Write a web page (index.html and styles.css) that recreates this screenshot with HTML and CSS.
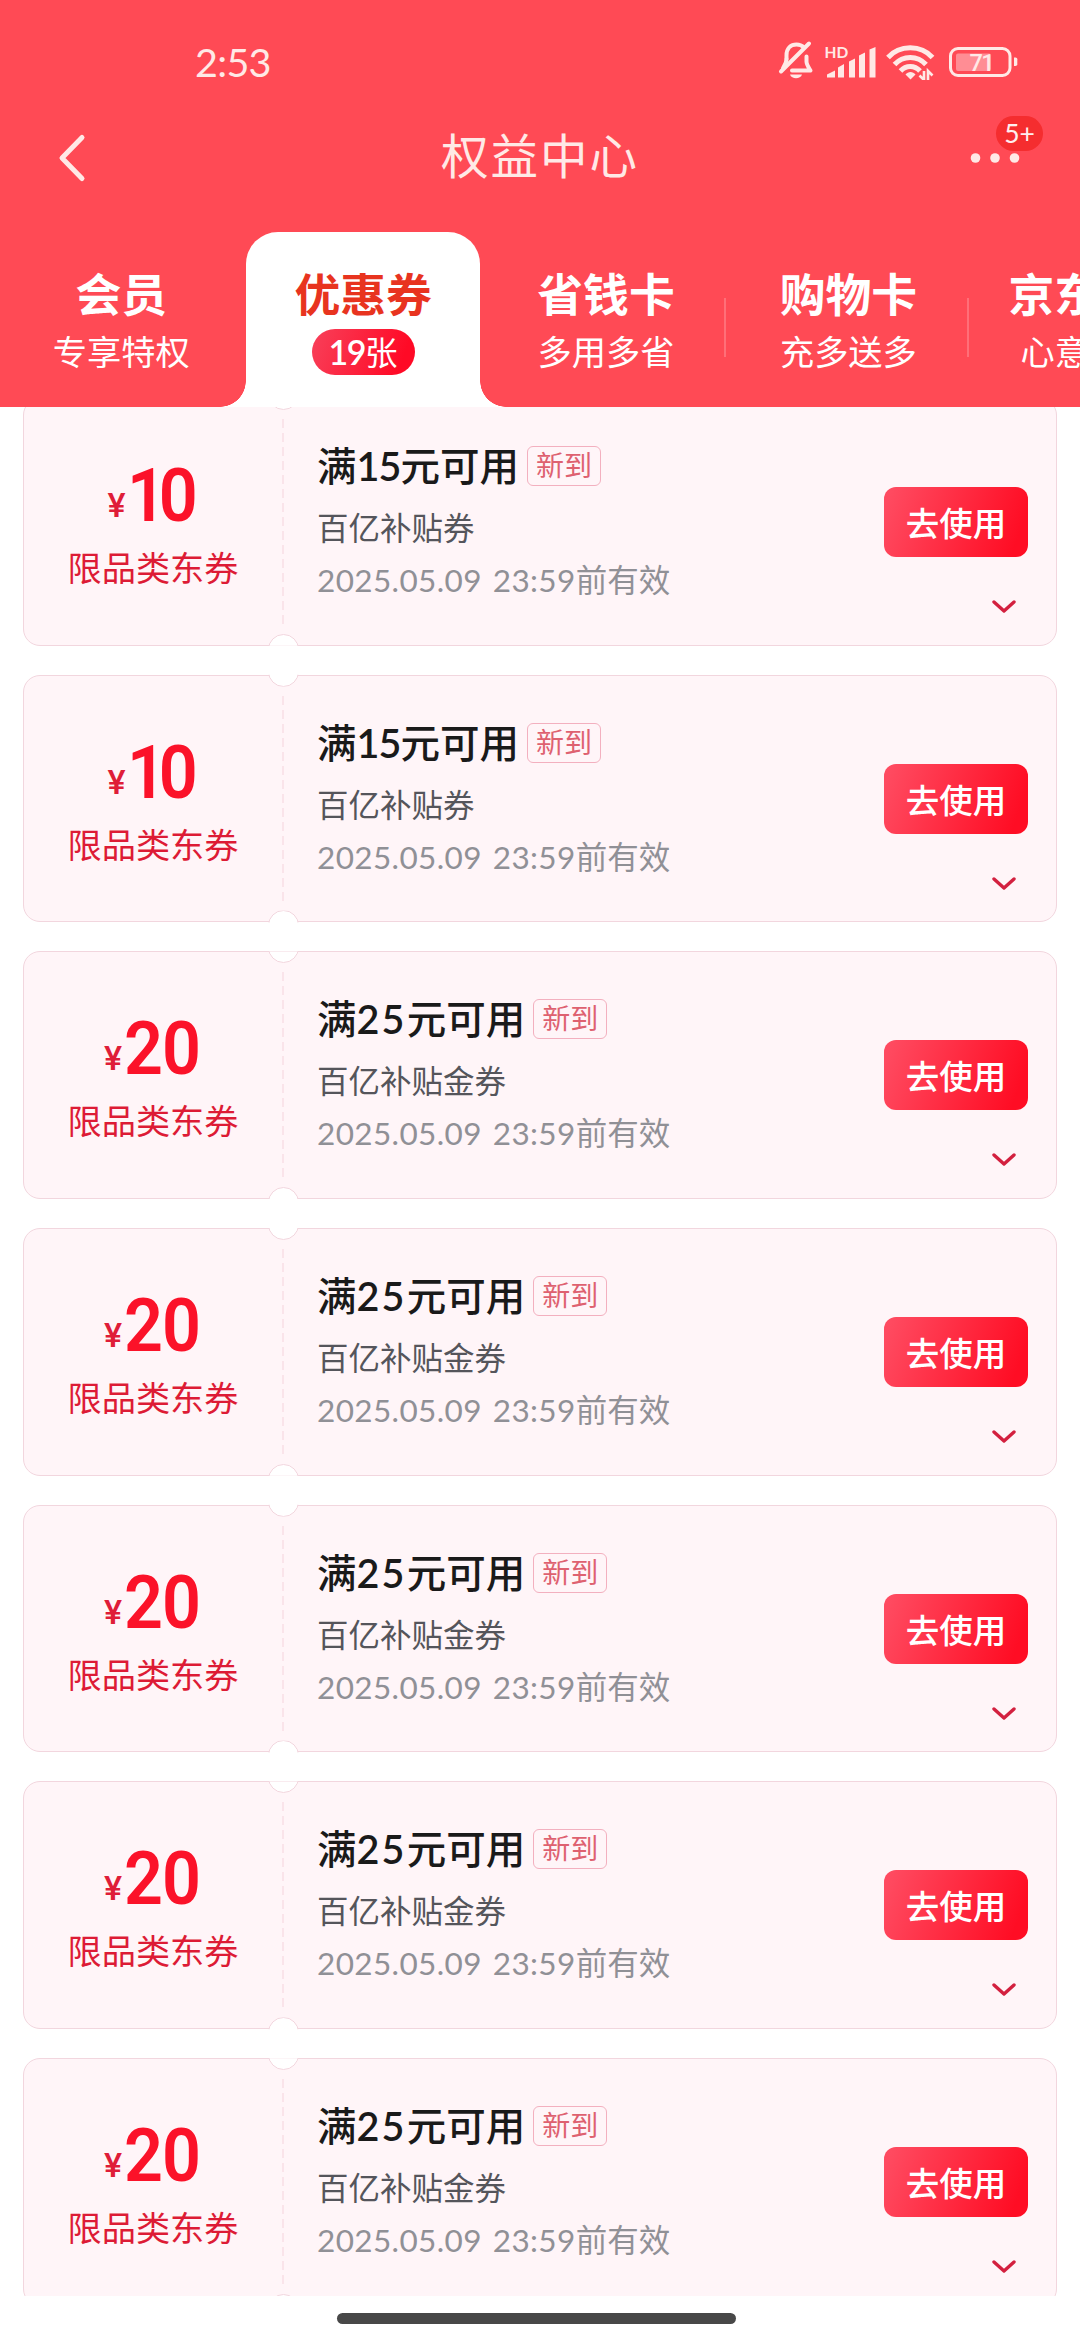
FILE: index.html
```html
<!DOCTYPE html>
<html lang="zh-CN">
<head>
<meta charset="utf-8">
<title>权益中心</title>
<link rel="stylesheet" href="styles.css">
</head>
<body>
<svg width="0" height="0" class="defs">
  <symbol id="chevron" viewBox="0 0 24 13"><path d="M2 2l10 9 10-9" fill="none" stroke="#d3203f" stroke-width="3.4" stroke-linecap="round" stroke-linejoin="round"/></symbol>
</svg>
<div class="screen">
  <header class="header">
    <div class="status">
      <span class="clock">2:53</span>
      <svg class="status-icons" width="242" height="40" viewBox="0 0 242 40" fill="none" stroke="#ffe9e6">
        <g stroke-width="4" stroke-linecap="round" stroke-linejoin="round">
          <path d="M8.500 19v-3.500C8.500 8 13 4.500 18.500 4.500c3 0 5.500 1 7.500 3"/>
          <path d="M28.500 16.500v5c0 3 1.500 5 4 9H14"/>
          <path d="M8.500 19c0 4-1.500 6-3.500 9"/>
          <path d="M3 31.500L31 3.500"/>
        </g>
        <path d="M12 34.500h12c-1.500 5-10.500 5-12 0z" fill="#ffe9e6" stroke="none"/>
        <text x="46.500" y="17.500" class="hd">HD</text>
        <g fill="#ffe9e6" stroke="none">
          <path d="M49 37.500v-3l8-4v7z"/>
          <path d="M60 37.500V27.500l6-3.500v13.500z"/>
          <path d="M71 37.500V21.500l6-3v19z"/>
          <path d="M81 37.500V15.500l6-3v25z"/>
          <path d="M91.500 37.500V9.500l6-2.500v30.500z"/>
        </g>
        <g stroke-width="5">
          <path d="M110 17.500C121.500 4.500 143 4.500 154.500 17.500"/>
          <path d="M116.500 24.500c8.500-9.500 23-9.500 31.500 0"/>
          <path d="M122.500 31c5.500-6 14-6 19.500 0"/>
        </g>
        <path d="M132.500 39.500l-5-5c2.500-3.500 7.500-3.500 10 0z" fill="#ffe9e6" stroke="none"/>
        <path d="M146 31v9l-4.500-4.500M150 40v-9l4.500 4.500" stroke-width="2.600"/>
        <rect x="172.500" y="8.500" width="59.500" height="27" rx="7.500" stroke-width="3"/>
        <rect x="178" y="13.500" width="35" height="17.500" rx="2" fill="#ff8d94" stroke="none"/>
        <path d="M236 17.500h1.500q1.800 0 1.800 1.800v4.900q0 1.800-1.800 1.800H236z" fill="#ffe9e6" stroke="none"/>
        <text x="191.500" y="30.500" class="level">71</text>
      </svg>
    </div>
    <nav class="bar">
      <svg class="back" width="28" height="50" viewBox="0 0 28 50"><path d="M24 4.500L4 25l20 20.500" fill="none" stroke="#ffe9e6" stroke-width="5" stroke-linecap="round" stroke-linejoin="round"/></svg>
      <h1 class="title">权益中心</h1>
      <div class="more">
        <svg width="50" height="12" viewBox="0 0 50 12" fill="#ffe9e6"><circle cx="5.500" cy="6" r="4.800"/><circle cx="25" cy="6" r="4.800"/><circle cx="44.500" cy="6" r="4.800"/></svg>
        <span class="badge">5+</span>
      </div>
    </nav>
    <div class="tabs">
      <div class="tab"><b>会员</b><span>专享特权</span></div>
      <div class="tab active"><b>优惠券</b><span class="pill"><i>19</i>张</span></div>
      <div class="tab ruled"><b>省钱卡</b><span>多用多省</span></div>
      <div class="tab ruled"><b>购物卡</b><span>充多送多</span></div>
      <div class="tab cut"><b>京东</b><span>心意</span></div>
    </div>
  </header>

  <main class="list">
    <article class="card">
      <div class="worth"><p class="amount"><small>¥</small><strong class="ten">10</strong></p><p class="kind">限品类东券</p></div>
      <div class="info"><h2>满<span class="n15">15</span>元可用<em>新到</em></h2><p class="scope">百亿补贴券</p><p class="until"><time>2025.05.09 23:59</time>前有效</p></div>
      <div class="act"><button>去使用</button><svg class="chev"><use href="#chevron"/></svg></div>
    </article>
    <article class="card">
      <div class="worth"><p class="amount"><small>¥</small><strong class="ten">10</strong></p><p class="kind">限品类东券</p></div>
      <div class="info"><h2>满<span class="n15">15</span>元可用<em>新到</em></h2><p class="scope">百亿补贴券</p><p class="until"><time>2025.05.09 23:59</time>前有效</p></div>
      <div class="act"><button>去使用</button><svg class="chev"><use href="#chevron"/></svg></div>
    </article>
    <article class="card">
      <div class="worth"><p class="amount"><small>¥</small><strong>20</strong></p><p class="kind">限品类东券</p></div>
      <div class="info"><h2>满<span class="n25">25</span>元可用<em>新到</em></h2><p class="scope">百亿补贴金券</p><p class="until"><time>2025.05.09 23:59</time>前有效</p></div>
      <div class="act"><button>去使用</button><svg class="chev"><use href="#chevron"/></svg></div>
    </article>
    <article class="card">
      <div class="worth"><p class="amount"><small>¥</small><strong>20</strong></p><p class="kind">限品类东券</p></div>
      <div class="info"><h2>满<span class="n25">25</span>元可用<em>新到</em></h2><p class="scope">百亿补贴金券</p><p class="until"><time>2025.05.09 23:59</time>前有效</p></div>
      <div class="act"><button>去使用</button><svg class="chev"><use href="#chevron"/></svg></div>
    </article>
    <article class="card">
      <div class="worth"><p class="amount"><small>¥</small><strong>20</strong></p><p class="kind">限品类东券</p></div>
      <div class="info"><h2>满<span class="n25">25</span>元可用<em>新到</em></h2><p class="scope">百亿补贴金券</p><p class="until"><time>2025.05.09 23:59</time>前有效</p></div>
      <div class="act"><button>去使用</button><svg class="chev"><use href="#chevron"/></svg></div>
    </article>
    <article class="card">
      <div class="worth"><p class="amount"><small>¥</small><strong>20</strong></p><p class="kind">限品类东券</p></div>
      <div class="info"><h2>满<span class="n25">25</span>元可用<em>新到</em></h2><p class="scope">百亿补贴金券</p><p class="until"><time>2025.05.09 23:59</time>前有效</p></div>
      <div class="act"><button>去使用</button><svg class="chev"><use href="#chevron"/></svg></div>
    </article>
    <article class="card">
      <div class="worth"><p class="amount"><small>¥</small><strong>20</strong></p><p class="kind">限品类东券</p></div>
      <div class="info"><h2>满<span class="n25">25</span>元可用<em>新到</em></h2><p class="scope">百亿补贴金券</p><p class="until"><time>2025.05.09 23:59</time>前有效</p></div>
      <div class="act"><button>去使用</button><svg class="chev"><use href="#chevron"/></svg></div>
    </article>
  </main>
  <footer class="gesture"><div class="handle"></div></footer>
</div>
</body>
</html>
```
FILE: styles.css
```css
* { box-sizing: border-box; margin: 0; padding: 0; }
body {
  font-family: Lato, "Noto Sans CJK SC", sans-serif;
  background: #fff;
  color: #1a1a1a;
}
.defs { display: block; }
.screen {
  width: 1080px;
  height: 2340px;
  overflow: hidden;
  display: flex;
  flex-direction: column;
}

/* header */
.header {
  flex: none;
  height: 407px;
  background: #ff4a55;
  color: #fff;
  display: flex;
  flex-direction: column;
}
.status {
  height: 84px;
  padding: 40px 60px 0 195px;
  display: flex;
  justify-content: space-between;
}
.clock {
  height: 44px;
  line-height: 44px;
  font-size: 39.500px;
  letter-spacing: -0.700px;
  color: #ffe9e6;
}
.hd { font: 700 15.500px Lato, sans-serif; fill: #ffe9e6; stroke: none; }
.level { font: 500 23.500px Roboto, sans-serif; letter-spacing: -1.500px; fill: #ffe9e6; stroke: none; }
.bar {
  height: 148px;
  display: grid;
  grid-template-columns: 200px 1fr 200px;
  align-items: center;
}
.back { margin-left: 58px; }
.title {
  padding-bottom: 4px;
  font-size: 47.500px;
  letter-spacing: 2px;
  font-weight: 400;
  line-height: 60px;
  text-align: center;
  color: #ffe9e6;
}
.more { position: relative; height: 12px; margin-left: 90px; display: flex; }
.badge {
  position: absolute;
  left: 26px;
  top: -36px;
  width: 47px;
  height: 35px;
  border-radius: 18px;
  background: #f52d2f;
  font-size: 26.500px;
  line-height: 35px;
  text-align: center;
  color: #ffeeee;
}
.tabs { height: 175px; display: flex; overflow: hidden; }
.tab {
  position: relative;
  flex: none;
  width: 242.400px;
  padding-top: 34px;
  display: flex;
  flex-direction: column;
  align-items: center;
}
.tab b { font-size: 45.800px; line-height: 58px; font-weight: 700; }
.tab span { font-size: 34.200px; line-height: 46px; margin-top: 5px; }
.ruled::after {
  content: "";
  position: absolute;
  right: 1px;
  top: 66px;
  width: 2px;
  height: 59px;
  background: #ff6f78;
}
.active { width: 233.400px; margin: 0 5px 0 4px; background: #fff; color: #e8341f; border-radius: 32px 32px 0 0; }
.active::before, .active::after {
  content: "";
  position: absolute;
  bottom: 0;
  width: 26px;
  height: 26px;
}
.active::before { right: 100%; background: radial-gradient(circle at 0 0, transparent 25.500px, #fff 26px); }
.active::after { left: 100%; background: radial-gradient(circle at 100% 0, transparent 25.500px, #fff 26px); }
.tab .pill {
  width: 103px;
  height: 46px;
  border-radius: 23px;
  background: linear-gradient(110deg, #f8405a, #ff0a26 85%);
  color: #fff;
  font-size: 32.500px;
  text-align: center;
}
.pill i { font-style: normal; font-weight: 600; font-size: 34px; letter-spacing: -1.500px; }
.cut { padding-left: 39px; align-items: flex-start; }
.cut span { padding-left: 12px; }

/* coupon list */
.list {
  height: 1889px;
  overflow: hidden;
  padding: 0 23px;
  display: flex;
  flex-direction: column;
  gap: 29px;
}
.list .card:first-child { margin-top: -9px; }
.card {
  position: relative;
  flex: none;
  height: 247.700px;
  border: 1.500px solid #f2d6de;
  border-radius: 17px;
  background: #fff5f8;
  display: grid;
  grid-template-columns: 260px 1fr 172px;
}
.card::before, .card::after {
  content: "";
  position: absolute;
  left: 244px;
  width: 29px;
  height: 29px;
  border: 1.500px solid #f2d6de;
  border-radius: 50%;
  background: #fff;
}
.card::before { top: -20px; clip-path: inset(19px 0 0 0); }
.card::after { bottom: -20px; clip-path: inset(0 0 19px 0); }
.worth {
  padding: 54px 2px 0 0;
  text-align: center;
  background: repeating-linear-gradient(#fae4ea 0 9px, transparent 9px 14px) right 20px / 2px 206px no-repeat;
}
.amount {
  height: 84px;
  display: flex;
  justify-content: center;
  align-items: baseline;
  font-family: Roboto, sans-serif;
  color: #fb1229;
}
.amount small {
  font-size: 34px;
  line-height: 84px;
  font-weight: 500;
  color: #df1d38;
  transform: translateY(-4px);
}
.amount strong {
  font-size: 75px;
  line-height: 84px;
  font-weight: 600;
  letter-spacing: -1px;
  margin: 0 -6px 0 2px;
  transform: scaleX(.91);
  transform-origin: left center;
}
.amount .ten { letter-spacing: -8px; margin: 0 2px 0 1px; }
.kind { margin-top: 8px; font-size: 34.200px; line-height: 46px; color: #dd1b35; }
.info { padding: 38px 0 0 33px; white-space: nowrap; }
.info h2 {
  height: 58px;
  display: flex;
  align-items: center;
  font-size: 39.500px;
  line-height: 58px;
  font-weight: 500;
}
.info h2 span { font-weight: 600; }
.n15 { letter-spacing: -0.900px; }
.n25 { letter-spacing: 2.200px; }
.info em {
  width: 74px;
  height: 40px;
  margin-left: 8px;
  border: 1.500px solid #f3b0bf;
  border-radius: 6px;
  font-size: 28px;
  line-height: 37px;
  font-style: normal;
  font-weight: 400;
  text-align: center;
  color: #de6170;
}
.scope { margin-top: 7px; font-size: 31.500px; line-height: 52px; color: #55555b; }
.until { font-size: 31.500px; line-height: 53px; color: #909096; }
.until time { letter-spacing: .380px; word-spacing: 2.500px; }
.act { padding: 88px 28px 0 0; display: flex; flex-direction: column; align-items: flex-end; }
.act button {
  width: 144px;
  height: 70px;
  border: 0;
  border-radius: 12px;
  background: linear-gradient(110deg, #ff4a60 5%, #ff0d24 90%);
  color: #fff;
  font: 500 33.500px/68px "Noto Sans CJK SC", sans-serif;
}
.chev { width: 24px; height: 13px; margin: 43px 12px 0 0; }

.gesture { flex: 1; padding-top: 17px; display: flex; justify-content: center; align-items: flex-start; background: #fff; }
.handle { width: 399px; height: 11px; margin-right: 7px; border-radius: 6px; background: #484848; }
```
